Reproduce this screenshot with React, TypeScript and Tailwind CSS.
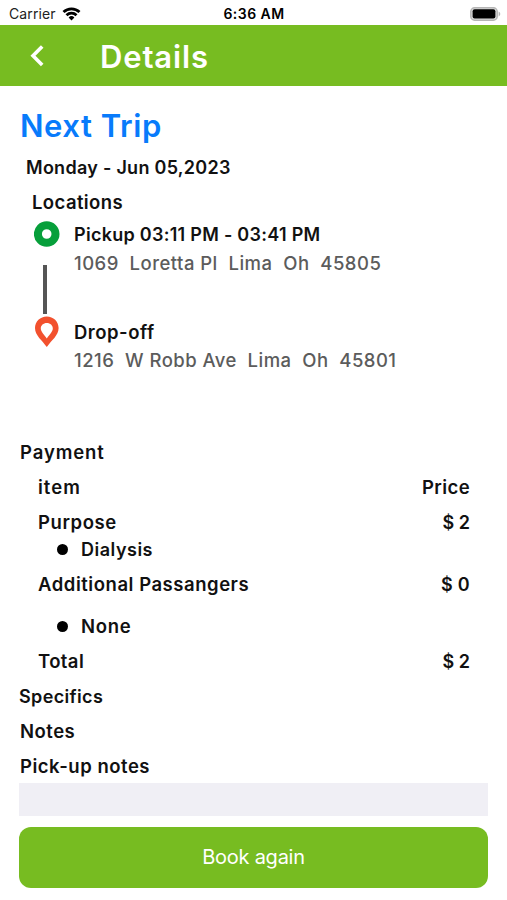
import clsx from "clsx";

type StopProps = {
  title: string;
  address: string;
  titleClass?: string;
  addressClass?: string;
};

type RowProps = {
  label: string;
  price: string;
  labelClass?: string;
  priceClass?: string;
};

function StatusBar() {
  return (
    <div className="grid h-[25px] grid-cols-3 items-center pt-[2px] text-[14px] leading-none">
      <div className="flex items-center gap-[6px] pl-[9px] text-[#222]">
        <span className="tracking-[0.1px]">Carrier</span>
        <svg width="19" height="14" viewBox="0 0 18 14" fill="none" stroke="#000" strokeWidth="2.8">
          <path d="M1 5.1a11.4 11.4 0 0 1 16 0" />
          <path d="M4 8.2a7.2 7.2 0 0 1 10 0" />
          <path d="M9 13.4 6.1 10.5a4.1 4.1 0 0 1 5.8 0z" fill="#000" stroke="none" />
        </svg>
      </div>
      <div className="pl-px text-center font-semibold tracking-[0.45px] text-black">6:36 AM</div>
      <div className="flex justify-end pr-[6px]">
        <svg width="31" height="14" viewBox="0 0 31 14">
          <rect x="0.8" y="0.8" width="26.4" height="12.4" rx="3.8" fill="#ddd" stroke="#b5b5b5" strokeWidth="1.5" />
          <rect x="2.6" y="2.3" width="22.8" height="9.2" rx="2" fill="#000" />
          <path d="M28.6 4.6c2.2.8 2.2 4 0 4.8z" fill="#b5b5b5" />
        </svg>
      </div>
    </div>
  );
}

function Header() {
  return (
    <header className="flex h-[61px] items-center bg-[#77bc21] text-white">
      <button className="ml-[30px] h-[22px] w-[14px]" aria-label="Back">
        <svg width="14" height="22" viewBox="0 0 14 22" fill="none" stroke="#fff" strokeWidth="3.6">
          <path d="M12.2 1.6 3 10.8l9.2 9.2" />
        </svg>
      </button>
      <h1 className="ml-[56px] pt-px text-[31px] leading-none font-semibold tracking-[0.85px]">Details</h1>
    </header>
  );
}

function Stop({ title, address, titleClass, addressClass }: StopProps) {
  return (
    <div className="whitespace-pre">
      <div className={clsx("leading-[28px] font-semibold", titleClass)}>{title}</div>
      <div className={clsx("leading-[29px] font-medium text-[#5c5c5c]", addressClass)}>{address}</div>
    </div>
  );
}

function Row({ label, price, labelClass, priceClass }: RowProps) {
  return (
    <div className="flex justify-between pr-[18px] pl-[19px] leading-[35px]">
      <span className={labelClass}>{label}</span>
      <span className={priceClass}>{price}</span>
    </div>
  );
}

function Bullet({ text, textClass }: { text: string; textClass?: string }) {
  return (
    <div className="flex items-center pl-[38px]">
      <span className="mr-[13px] size-[11px] rounded-full bg-black" />
      <span className={textClass}>{text}</span>
    </div>
  );
}

export default function App() {
  return (
    <div className="h-[900px] w-[507px] overflow-hidden bg-white font-['Inter',sans-serif] text-[18px] text-[#111]">
      <StatusBar />
      <Header />

      <main className="px-[19px] pt-[20px] font-semibold">
        <h2 className="pl-px text-[31px] leading-[40px] tracking-[0.55px] text-[#087bfb]">Next Trip</h2>

        <section className="mt-[5px]">
          <div className="pl-[7px] leading-[34.5px] tracking-[0.28px]">Monday - Jun 05,2023</div>
          <div className="pb-[2px] pl-[13px] text-[18.5px] leading-[32px] tracking-[0.4px]">Locations</div>
          <div className="flex h-[215px] pt-[1px] pl-[15px]">
            <div className="flex w-[40px] shrink-0 flex-col">
              <svg width="26" height="26" viewBox="0 0 26 26">
                <circle cx="12.7" cy="13" r="8.8" fill="#fff" stroke="#079f3b" strokeWidth="8" />
              </svg>
              <div className="mt-[18px] ml-[9px] h-[49px] w-[4px] bg-[#555]" />
              <svg className="mt-[2px] ml-px" width="24" height="32" viewBox="0 0 24 32">
                <path
                  fill="#f2512e"
                  fillRule="evenodd"
                  d="M11.8.5C5.2.5 0 5.6 0 12c0 7.5 7.3 12.5 11.8 19 4.5-6.5 11.8-11.5 11.8-19C23.6 5.6 18.4.5 11.8.5zm0 6.5c3.500 0 6 2.400 6 5.500 0 3-3.400 6.200-6 10-2.600-3.800-6-7-6-10 0-3.100 2.500-5.500 6-5.500z"
                />
              </svg>
            </div>
            <div className="flex flex-col gap-[40px]">
              <Stop
                title="Pickup 03:11 PM - 03:41 PM"
                titleClass="tracking-[0.28px]"
                address="1069  Loretta Pl  Lima  Oh  45805"
                addressClass="text-[18.5px] tracking-[0.47px]"
              />
              <Stop
                title="Drop-off"
                titleClass="text-[18.5px] tracking-[0.5px]"
                address="1216  W Robb Ave  Lima  Oh  45801"
                addressClass="text-[18.5px] tracking-[0.46px]"
              />
            </div>
          </div>
        </section>

        <section>
          <div className="pl-px text-[18.5px] leading-[35px] tracking-[0.9px]">Payment</div>
          <Row
            label="item"
            labelClass="text-[18.5px] tracking-[1px]"
            price="Price"
            priceClass="text-[18.5px] tracking-[0.4px]"
          />
          <Row label="Purpose" labelClass="text-[18.5px] tracking-[0.6px]" price="$ 2" />
          <div className="leading-[20px]">
            <Bullet text="Dialysis" textClass="tracking-[0.5px]" />
          </div>
          <div className="pt-[7px]">
            <Row
              label="Additional Passangers"
              labelClass="text-[18.5px] tracking-[0.54px]"
              price="$ 0"
              priceClass="tracking-[0.3px]"
            />
          </div>
          <div className="pt-[7px] leading-[35px]">
            <Bullet text="None" textClass="text-[18.5px] tracking-[0.7px]" />
          </div>
          <Row label="Total" labelClass="text-[18.5px] tracking-[0.4px]" price="$ 2" />
        </section>

        <section className="pt-px">
          <div className="leading-[34px] tracking-[0.35px]">Specifics</div>
          <div className="pl-px text-[18.5px] leading-[35px] tracking-[0.5px]">Notes</div>
          <div className="pl-px text-[18.5px] leading-[34px] tracking-[0.52px]">Pick-up notes</div>
          <div className="h-[33px] bg-[#f0eff5]" />
        </section>

        <button className="mt-[11px] h-[61px] w-full rounded-[12px] bg-[#77bc21] text-[20px] font-normal tracking-[-0.25px] text-white">
          Book again
        </button>
      </main>
    </div>
  );
}
